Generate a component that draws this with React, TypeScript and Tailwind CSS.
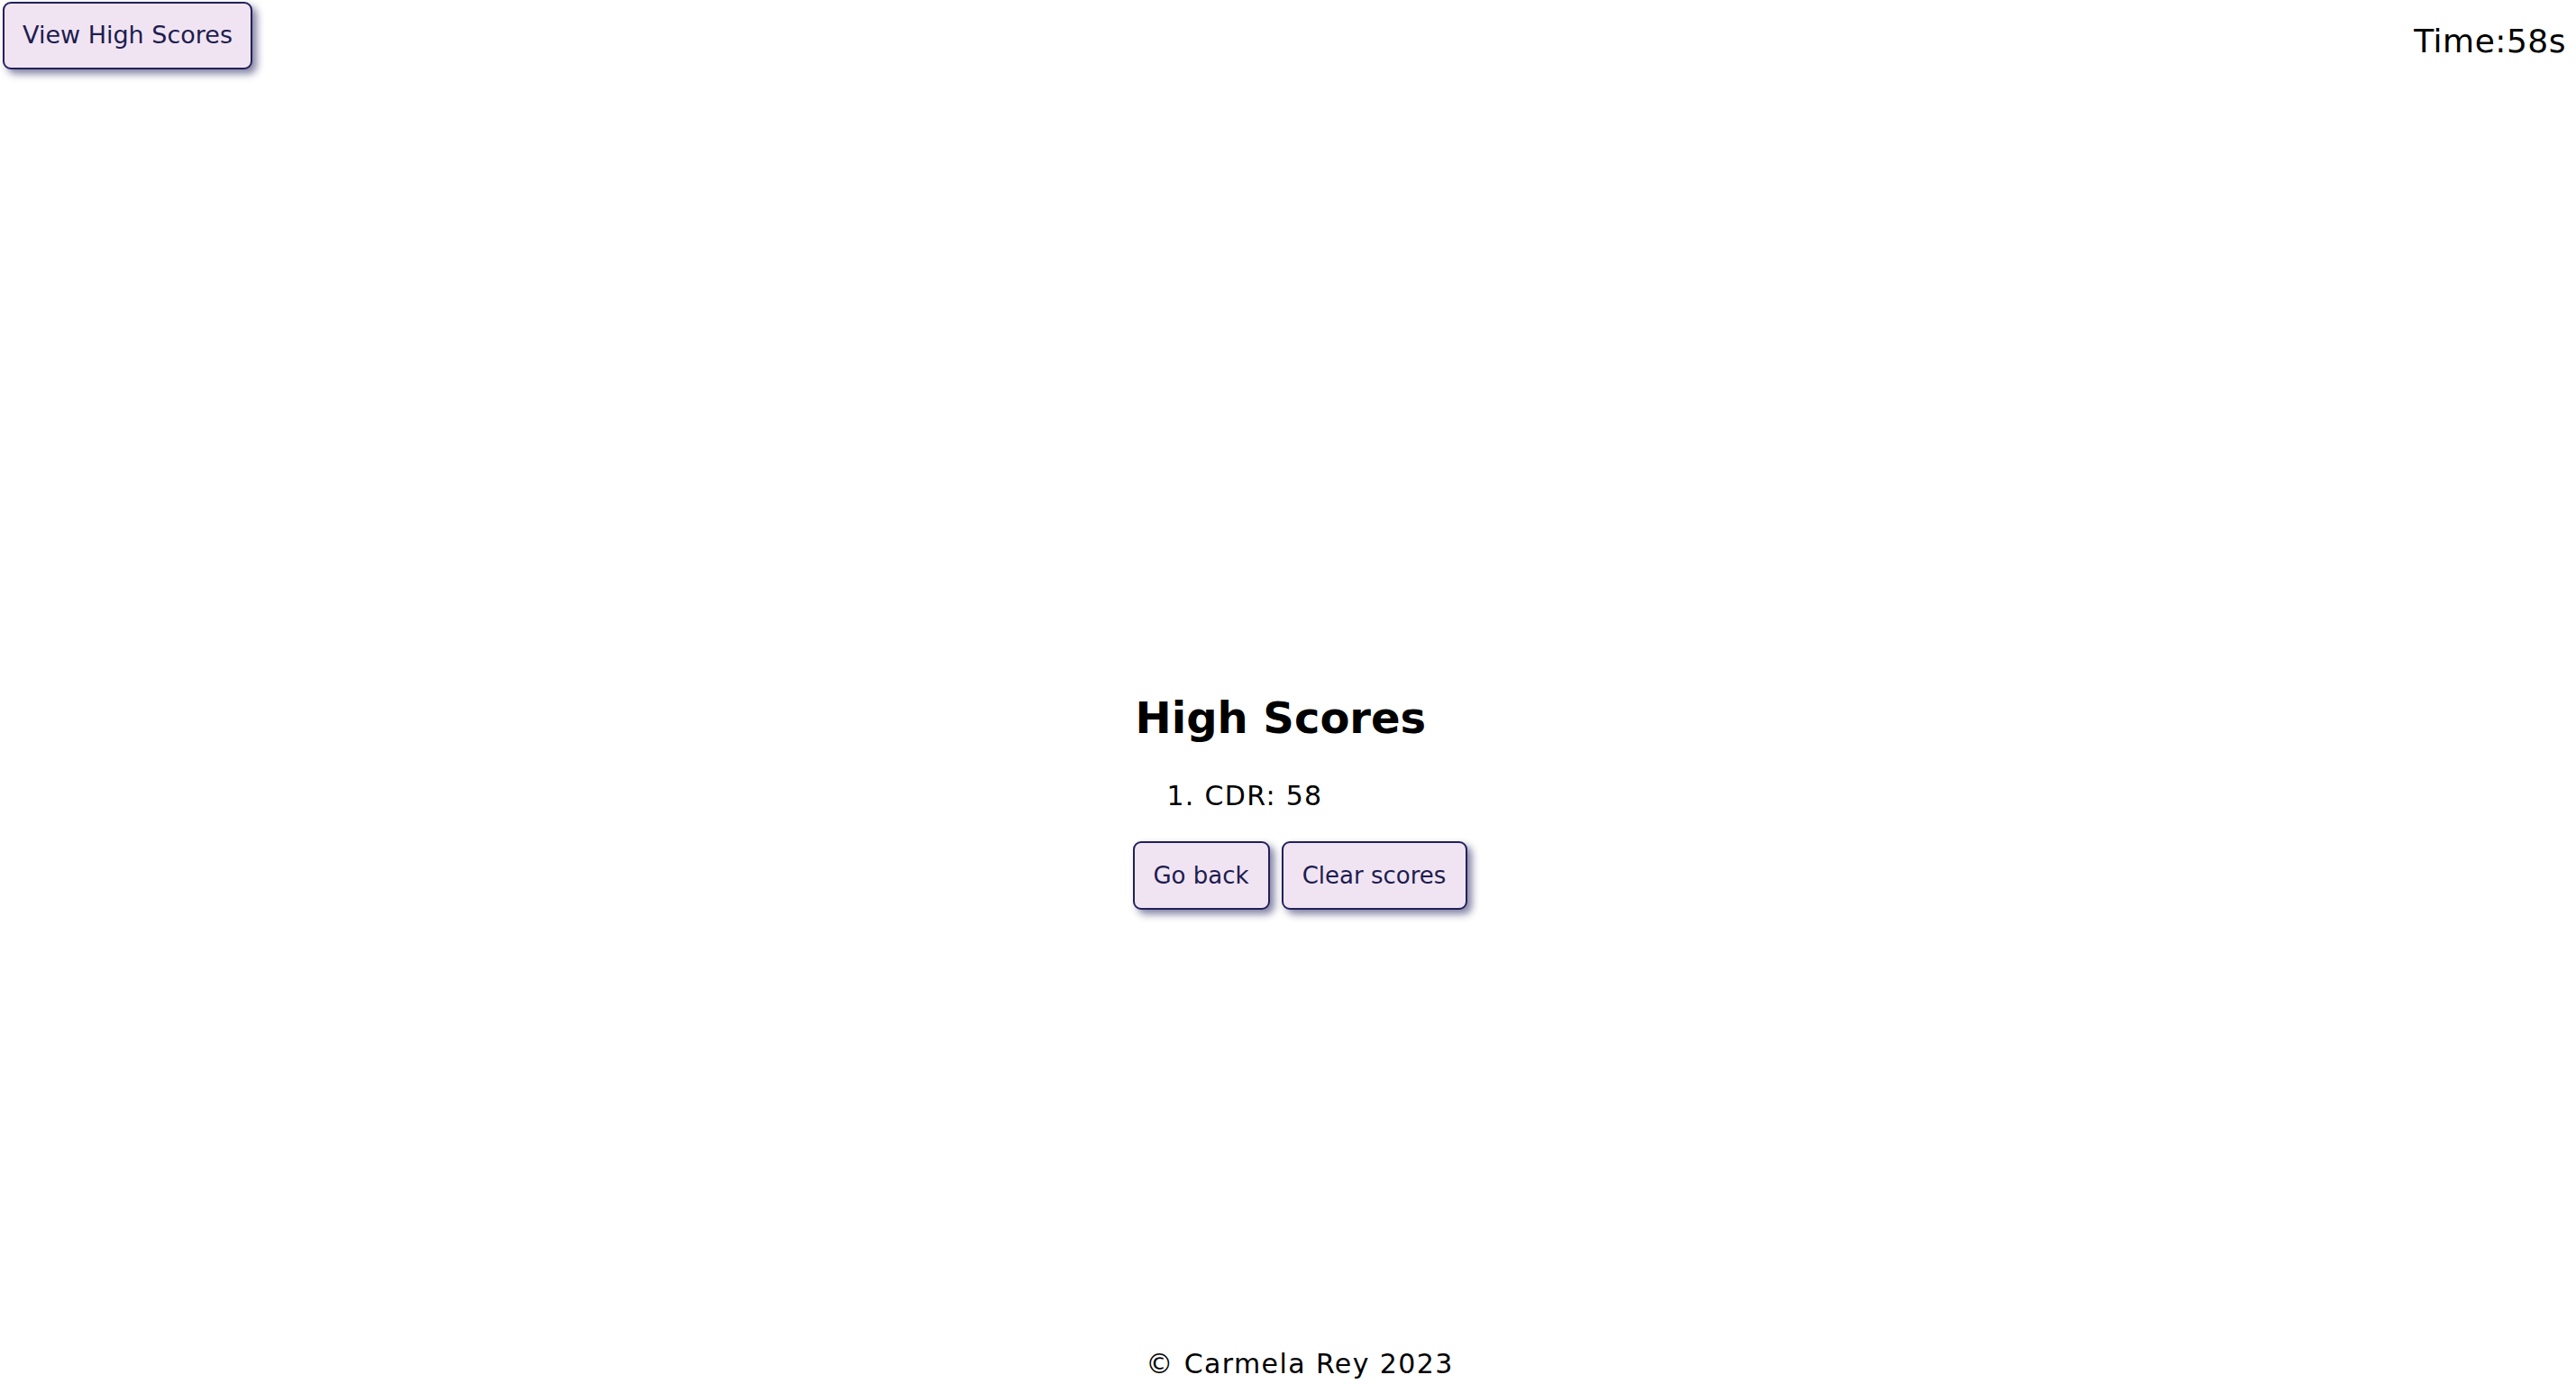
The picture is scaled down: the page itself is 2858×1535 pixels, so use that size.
import { useState } from "react";

const btn =
  "bg-[#f1e4f2] text-[#1d1d50] border-2 border-[#22225a] rounded-[9px] shadow-[5px_5px_8px_rgba(30,30,90,0.55)] cursor-pointer";

const App = () => {
  const [scores] = useState([{ initials: "CDR", score: 58 }]);

  return (
    <div
      className="min-h-screen flex flex-col bg-white text-black"
      style={{ fontFamily: '"DejaVu Sans", Verdana, sans-serif' }}
    >
      {/* top bar */}
      <div className="flex justify-between items-start">
        <button className={`${btn} ml-[3px] mt-[2px] h-[75px] px-[20px] text-[27px]`}>
          View High Scores
        </button>
        <div className="mt-[25px] mr-[11px] text-[36px] leading-[42px] tracking-[0.5px]">Time:58s</div>
      </div>

      {/* scores */}
      <div className="flex justify-center pl-[26px] pt-[691px]">
        <div className="w-[371px]">
          <h2 className="ml-[3px] text-[48px] font-bold leading-[56px]">High Scores</h2>
          <ol className="list-decimal pl-[80px] mt-[42px] text-[30px] leading-[34px] tracking-[1.3px]">
            {scores.map((s) => (
              <li key={s.initials}>
                {s.initials}: {s.score}
              </li>
            ))}
          </ol>
          <div className="flex gap-[13px] mt-[33px]">
            <button className={`${btn} w-[152px] h-[76px] text-[26px]`}>Go back</button>
            <button className={`${btn} w-[206px] h-[76px] text-[26px]`}>Clear scores</button>
          </div>
        </div>
      </div>

      <footer className="mt-auto pb-[5px] pl-[26px] text-center text-[30px] leading-[34px] tracking-[1.4px]">
        © Carmela Rey 2023
      </footer>
    </div>
  );
};

export default App;
